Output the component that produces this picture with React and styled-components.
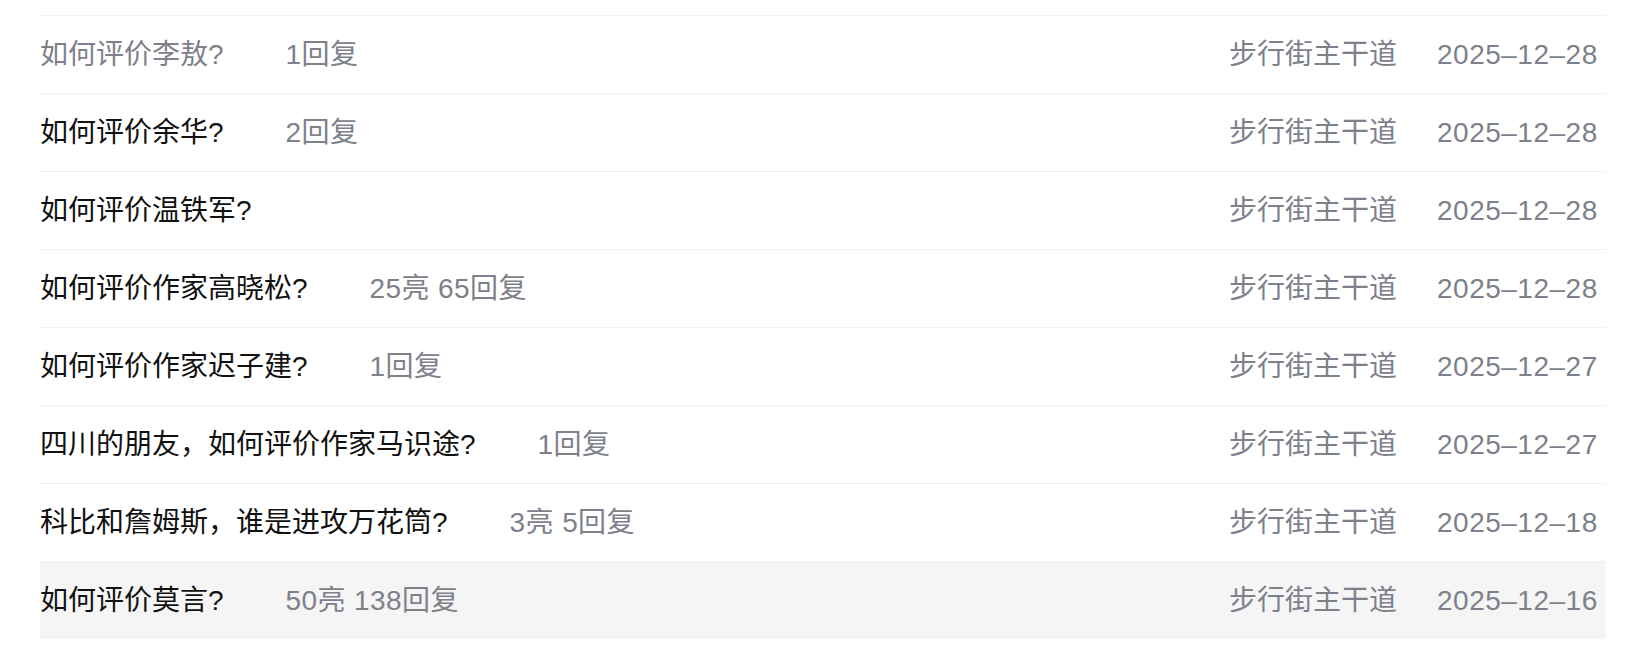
import React from 'react';
import styled, { createGlobalStyle } from 'styled-components';

const GlobalStyle = createGlobalStyle`
  body {
    margin: 0;
    background: #fff;
    font-family: "Liberation Sans", "Noto Sans CJK SC", sans-serif;
  }
`;

const List = styled.ul`
  list-style: none;
  margin: 0 40px;
  padding: 15px 0 0;
`;

const Row = styled.li`
  display: flex;
  align-items: center;
  box-sizing: border-box;
  height: 78px;
  border-top: 1px solid #f0f0f0;
  background: ${(p) => (p.active ? '#f5f5f5' : 'transparent')};
  font-size: 28px;
  line-height: 1;
`;

const Title = styled.a`
  margin-right: 62px;
  color: ${(p) => (p.visited ? '#7e818a' : '#111')};
  text-decoration: none;
  white-space: nowrap;
`;

const Meta = styled.span`
  color: #7e818a;
  letter-spacing: 0.4px;
  white-space: nowrap;
`;

const Spacer = styled.div`
  flex: 1;
`;

const Source = styled.span`
  width: 168px;
  margin-right: 40px;
  color: #7e818a;
  white-space: nowrap;
`;

const Date = styled.span`
  width: 169px;
  color: #7e818a;
  letter-spacing: 0.5px;
  white-space: nowrap;
`;

const threads = [
  { title: '如何评价李敖?', meta: '1回复', date: '2025–12–28', visited: true },
  { title: '如何评价余华?', meta: '2回复', date: '2025–12–28' },
  { title: '如何评价温铁军?', meta: '', date: '2025–12–28' },
  { title: '如何评价作家高晓松?', meta: '25亮 65回复', date: '2025–12–28' },
  { title: '如何评价作家迟子建?', meta: '1回复', date: '2025–12–27' },
  { title: '四川的朋友，如何评价作家马识途?', meta: '1回复', date: '2025–12–27' },
  { title: '科比和詹姆斯，谁是进攻万花筒?', meta: '3亮 5回复', date: '2025–12–18' },
  { title: '如何评价莫言?', meta: '50亮 138回复', date: '2025–12–16', active: true },
];

export default function App() {
  return (
    <>
      <GlobalStyle />
      <List>
        {threads.map((t) => (
          <Row key={t.title} active={t.active}>
            <Title href="#" visited={t.visited}>{t.title}</Title>
            {t.meta && <Meta>{t.meta}</Meta>}
            <Spacer />
            <Source>步行街主干道</Source>
            <Date>{t.date}</Date>
          </Row>
        ))}
      </List>
    </>
  );
}
